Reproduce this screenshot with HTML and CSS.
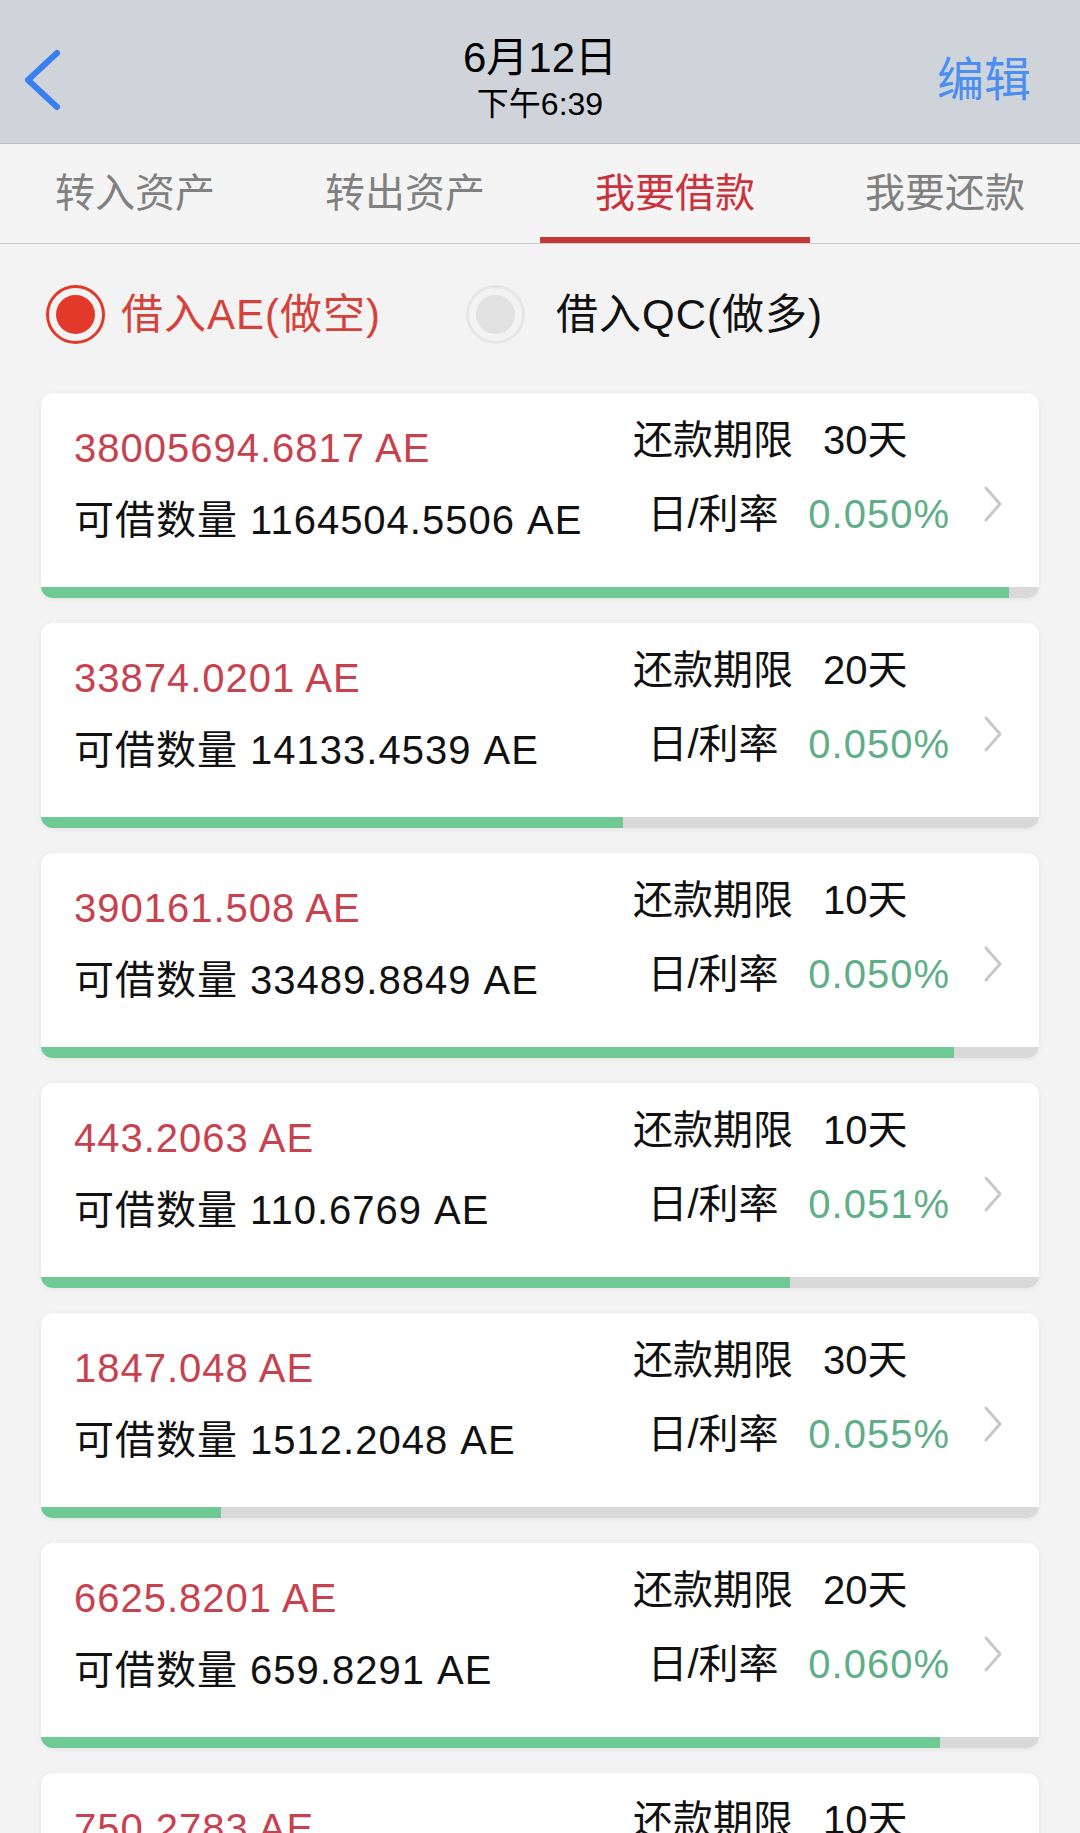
FILE: index.html
```html
<!DOCTYPE html>
<html lang="zh-CN">
<head>
  <meta charset="UTF-8">
  <title>我要借款</title>
  <link rel="stylesheet" href="styles.css">
</head>
<body>
  <header class="nav">
    <a class="nav-back">
      <svg width="44" height="70" viewBox="0 0 44 70"><polyline points="37,8 8,35 37,62" fill="none" stroke="#3a7ff0" stroke-width="6" stroke-linecap="round" stroke-linejoin="round"/></svg>
    </a>
    <div class="nav-title">
      <div class="nav-date">6月12日</div>
      <div class="nav-time">下午6:39</div>
    </div>
    <a class="nav-edit">编辑</a>
  </header>

  <nav class="tabs">
    <div class="tab">转入资产</div>
    <div class="tab">转出资产</div>
    <div class="tab active">我要借款</div>
    <div class="tab">我要还款</div>
  </nav>

  <div class="radios">
    <label class="radio radio-on"><span class="radio-dot"></span><span class="radio-text">借入AE(做空)</span></label>
    <label class="radio radio-off"><span class="radio-dot"></span><span class="radio-text">借入QC(做多)</span></label>
  </div>

  <div class="list">
    <div class="card">
      <div class="card-body">
        <div class="card-left">
          <div class="amount">38005694.6817 AE</div>
          <div class="avail">可借数量 1164504.5506 AE</div>
        </div>
        <div class="card-right">
          <div class="label">还款期限</div><div class="days">30天</div>
          <div class="label">日/利率</div><div class="rate">0.050%</div>
        </div>
        <svg class="card-arrow" width="20" height="38" viewBox="0 0 20 38"><polyline points="3,3 17,19 3,35" fill="none" stroke="#c8c8c8" stroke-width="3" stroke-linecap="round" stroke-linejoin="round"/></svg>
      </div>
      <div class="bar"><div class="bar-fill" style="width: 97%"></div></div>
    </div>

    <div class="card">
      <div class="card-body">
        <div class="card-left">
          <div class="amount">33874.0201 AE</div>
          <div class="avail">可借数量 14133.4539 AE</div>
        </div>
        <div class="card-right">
          <div class="label">还款期限</div><div class="days">20天</div>
          <div class="label">日/利率</div><div class="rate">0.050%</div>
        </div>
        <svg class="card-arrow" width="20" height="38" viewBox="0 0 20 38"><polyline points="3,3 17,19 3,35" fill="none" stroke="#c8c8c8" stroke-width="3" stroke-linecap="round" stroke-linejoin="round"/></svg>
      </div>
      <div class="bar"><div class="bar-fill" style="width: 58.3%"></div></div>
    </div>

    <div class="card">
      <div class="card-body">
        <div class="card-left">
          <div class="amount">390161.508 AE</div>
          <div class="avail">可借数量 33489.8849 AE</div>
        </div>
        <div class="card-right">
          <div class="label">还款期限</div><div class="days">10天</div>
          <div class="label">日/利率</div><div class="rate">0.050%</div>
        </div>
        <svg class="card-arrow" width="20" height="38" viewBox="0 0 20 38"><polyline points="3,3 17,19 3,35" fill="none" stroke="#c8c8c8" stroke-width="3" stroke-linecap="round" stroke-linejoin="round"/></svg>
      </div>
      <div class="bar"><div class="bar-fill" style="width: 91.5%"></div></div>
    </div>

    <div class="card">
      <div class="card-body">
        <div class="card-left">
          <div class="amount">443.2063 AE</div>
          <div class="avail">可借数量 110.6769 AE</div>
        </div>
        <div class="card-right">
          <div class="label">还款期限</div><div class="days">10天</div>
          <div class="label">日/利率</div><div class="rate">0.051%</div>
        </div>
        <svg class="card-arrow" width="20" height="38" viewBox="0 0 20 38"><polyline points="3,3 17,19 3,35" fill="none" stroke="#c8c8c8" stroke-width="3" stroke-linecap="round" stroke-linejoin="round"/></svg>
      </div>
      <div class="bar"><div class="bar-fill" style="width: 75%"></div></div>
    </div>

    <div class="card">
      <div class="card-body">
        <div class="card-left">
          <div class="amount">1847.048 AE</div>
          <div class="avail">可借数量 1512.2048 AE</div>
        </div>
        <div class="card-right">
          <div class="label">还款期限</div><div class="days">30天</div>
          <div class="label">日/利率</div><div class="rate">0.055%</div>
        </div>
        <svg class="card-arrow" width="20" height="38" viewBox="0 0 20 38"><polyline points="3,3 17,19 3,35" fill="none" stroke="#c8c8c8" stroke-width="3" stroke-linecap="round" stroke-linejoin="round"/></svg>
      </div>
      <div class="bar"><div class="bar-fill" style="width: 18%"></div></div>
    </div>

    <div class="card">
      <div class="card-body">
        <div class="card-left">
          <div class="amount">6625.8201 AE</div>
          <div class="avail">可借数量 659.8291 AE</div>
        </div>
        <div class="card-right">
          <div class="label">还款期限</div><div class="days">20天</div>
          <div class="label">日/利率</div><div class="rate">0.060%</div>
        </div>
        <svg class="card-arrow" width="20" height="38" viewBox="0 0 20 38"><polyline points="3,3 17,19 3,35" fill="none" stroke="#c8c8c8" stroke-width="3" stroke-linecap="round" stroke-linejoin="round"/></svg>
      </div>
      <div class="bar"><div class="bar-fill" style="width: 90.1%"></div></div>
    </div>

    <div class="card">
      <div class="card-body">
        <div class="card-left">
          <div class="amount">750.2783 AE</div>
          <div class="avail">可借数量 612.0934 AE</div>
        </div>
        <div class="card-right">
          <div class="label">还款期限</div><div class="days">10天</div>
          <div class="label">日/利率</div><div class="rate">0.060%</div>
        </div>
        <svg class="card-arrow" width="20" height="38" viewBox="0 0 20 38"><polyline points="3,3 17,19 3,35" fill="none" stroke="#c8c8c8" stroke-width="3" stroke-linecap="round" stroke-linejoin="round"/></svg>
      </div>
      <div class="bar"><div class="bar-fill" style="width: 60%"></div></div>
    </div>
  </div>
</body>
</html>
```

FILE: styles.css
```css
body {
  margin: 0;
  width: 1080px;
  background: #f3f3f3;
  font-family: "Liberation Sans", "Noto Sans CJK SC", sans-serif;
  color: #111;
}

/* top bar */
.nav {
  display: grid;
  grid-template-columns: 1fr auto 1fr;
  align-items: start;
  height: 143px;
  background: #cfd4db;
  border-bottom: 1px solid #b9bdc4;
}
.nav-back {
  padding: 45px 0 0 20px;
}
.nav-back svg {
  display: block;
}
.nav-title {
  text-align: center;
  color: #000;
}
.nav-date {
  margin-top: 34px;
  font-size: 42px;
  line-height: 48px;
}
.nav-time {
  margin-top: 2px;
  font-size: 32px;
  line-height: 40px;
}
.nav-edit {
  justify-self: end;
  margin-top: 57px;
  padding-right: 49px;
  font-size: 47px;
  line-height: 46px;
  color: #4b8ef1;
}

/* tabs */
.tabs {
  display: flex;
  height: 99px;
  background: #f4f4f4;
  border-bottom: 1px solid #cdcdcd;
}
.tab {
  flex: 1;
  text-align: center;
  font-size: 40px;
  line-height: 99px;
  color: #808080;
}
.tab.active {
  color: #c9333d;
  box-shadow: inset 0 -6px 0 #c23a35;
}

/* radio row */
.radios {
  display: flex;
  align-items: center;
  padding: 41px 0 49px 46px;
}
.radio {
  display: flex;
  align-items: center;
  font-size: 42px;
  line-height: 58px;
  letter-spacing: 1px;
}
.radio-dot {
  display: flex;
  align-items: center;
  justify-content: center;
  width: 59px;
  height: 59px;
  box-sizing: border-box;
  border-radius: 50%;
  border: 3px solid #e03a2d;
}
.radio-dot::before {
  content: "";
  width: 39px;
  height: 39px;
  border-radius: 50%;
  background: #e3392b;
}
.radio-on .radio-text {
  margin-left: 16px;
  color: #d5423b;
}
.radio-off {
  margin-left: 85px;
}
.radio-off .radio-dot {
  border-color: #e6e6e6;
}
.radio-off .radio-dot::before {
  background: #e1e1e1;
}
.radio-off .radio-text {
  margin-left: 31px;
  color: #111;
}

/* loan cards */
.list {
  display: flex;
  flex-direction: column;
  gap: 25px;
  padding: 0 41px;
}
.card {
  background: #fff;
  border-radius: 12px;
  overflow: hidden;
  box-shadow: 0 1px 5px rgba(0, 0, 0, 0.07);
}
.card-body {
  display: flex;
  align-items: flex-start;
  height: 194px;
  font-size: 40px;
  line-height: 48px;
  white-space: nowrap;
}
.card-left {
  flex: 1;
  display: flex;
  flex-direction: column;
  gap: 24px;
  padding: 31px 0 0 33px;
  letter-spacing: 1px;
}
.amount {
  color: #c7424f;
}
.card-right {
  display: grid;
  grid-template-columns: 160px 140px;
  column-gap: 17px;
  row-gap: 26px;
  padding-top: 23px;
}
.label {
  text-align: center;
}
.days {
  padding-left: 13px;
}
.rate {
  justify-self: end;
  color: #5fae88;
  letter-spacing: 1px;
}
.card-arrow {
  display: block;
  margin: 92px 36px 0 33px;
}
.bar {
  height: 11px;
  background: #d9d9d9;
}
.bar-fill {
  height: 100%;
  background: #6fc995;
}
```
